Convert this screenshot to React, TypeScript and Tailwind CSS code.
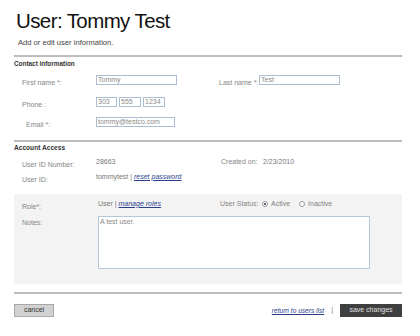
import React from "react";

function Label({ children, className = "" }: { children: React.ReactNode; className?: string }) {
  return <span className={`text-[7px] text-[#858585] ${className}`}>{children}</span>;
}

function TextBox({ value, className = "" }: { value: string; className?: string }) {
  return (
    <div className={`h-[10px] border border-[#aabdd2] bg-white px-[1px] text-[7px] leading-[8px] text-[#8a8a8a] ${className}`}>
      {value}
    </div>
  );
}

function Radio({ checked }: { checked?: boolean }) {
  return (
    <span className="flex h-[6px] w-[6px] items-center justify-center rounded-full border border-[#9a9a9a] bg-white">
      {checked && <span className="h-[2px] w-[2px] rounded-full bg-[#333]" />}
    </span>
  );
}

function Rule() {
  return <div className="h-[2px] w-[388px] bg-[#bdbdbd]" />;
}

export default function App() {
  return (
    <div
      className="relative h-[336px] w-[420px] overflow-hidden bg-white pl-[14px]"
      style={{ fontFamily: '"Liberation Sans", Arial, sans-serif' }}
    >
      {/* Header */}
      <h1 className="pt-[11px] pl-[2px] text-[20.5px] leading-[20px] tracking-[-0.6px] text-[#111]">User: Tommy Test</h1>
      <p className="mt-[7px] pl-[4px] text-[7.6px] leading-[9px] text-[#444]">Add or edit user information.</p>
      <div className="mt-[8px]">
        <Rule />
      </div>

      {/* Contact information */}
      <div className="mt-[2px] flex h-[10px] items-center text-[6.4px] font-bold text-[#333]">Contact information</div>
      <div className="mt-[5px] flex h-[12px] items-center">
        <div className="w-[82px] pl-[8px]">
          <Label>First name *:</Label>
        </div>
        <TextBox value="Tommy" className="w-[81px]" />
        <div className="ml-[41px] w-[41px] pl-[1px]">
          <Label>Last name *:</Label>
        </div>
        <TextBox value="Test" className="w-[81px]" />
      </div>
      <div className="mt-[10px] flex h-[12px] items-center">
        <div className="w-[82px] pl-[8px]">
          <Label>Phone :</Label>
        </div>
        <div className="flex gap-[2px]">
          <TextBox value="303" className="w-[21px]" />
          <TextBox value="555" className="w-[22px]" />
          <TextBox value="1234" className="w-[22px]" />
        </div>
      </div>
      <div className="mt-[8px] flex h-[12px] items-center">
        <div className="w-[82px] pl-[12px]">
          <Label>Email *:</Label>
        </div>
        <TextBox value="tommy@testco.com" className="w-[79px]" />
      </div>
      <div className="mt-[12px]">
        <Rule />
      </div>

      {/* Account access */}
      <div className="mt-[1px] flex h-[10px] items-center text-[6.6px] font-bold text-[#333]">Account Access</div>
      <div className="mt-[3px] flex h-[12px] items-center">
        <div className="w-[82px] pl-[8px]">
          <Label>User ID Number:</Label>
        </div>
        <span className="w-[125px] text-[7px] text-[#777]">28663</span>
        <Label className="w-[42px]">Created on:</Label>
        <span className="text-[7px] text-[#777]">2/23/2010</span>
      </div>
      <div className="mt-[3px] flex h-[12px] items-center">
        <div className="w-[82px] pl-[8px]">
          <Label>User ID:</Label>
        </div>
        <span className="text-[7px] text-[#777]">
          tommytest |{" "}
          <a className="italic text-[#2a3f8c] underline">reset password</a>
        </span>
      </div>

      {/* Role / notes panel */}
      <div className="mt-[11px] w-[388px] bg-[#f3f3f3] pt-[4px] pb-[15px]">
        <div className="flex h-[12px] items-center">
          <div className="w-[84px] pl-[8px]">
            <Label>Role*:</Label>
          </div>
          <span className="w-[122px] text-[7px] text-[#777]">
            User |{" "}
            <a className="italic text-[#2a3f8c] underline">manage roles</a>
          </span>
          <Label className="w-[42px]">User Status:</Label>
          <div className="flex items-center gap-[3px] text-[7px] text-[#808080]">
            <Radio checked />
            <span className="mr-[6px]">Active</span>
            <Radio />
            <span>Inactive</span>
          </div>
        </div>
        <div className="mt-[6px] flex">
          <div className="w-[84px] pl-[8px] leading-[8px]">
            <Label>Notes:</Label>
          </div>
          <div className="h-[53px] w-[272px] border border-[#b5c7d8] bg-white px-[1px] text-[7px] leading-[9px] text-[#8a8a8a]">
            A test user.
          </div>
        </div>
      </div>
      <div className="mt-[8px]">
        <Rule />
      </div>

      {/* Footer actions */}
      <div className="mt-[10px] flex w-[388px] items-center">
        <button className="flex h-[13px] w-[40px] items-center justify-center border border-[#a8a8a8] bg-[#d2d2d2] text-[7px] text-[#333]">
          cancel
        </button>
        <div className="ml-auto flex items-center">
          <a className="text-[6.6px] italic text-[#2a3f8c] underline">return to users list</a>
          <span className="mx-[7px] text-[7px] text-[#777]">|</span>
          <button className="flex h-[13px] w-[62px] items-center justify-center bg-[#3f3f3f] text-[7px] text-[#e0e0e0]">
            save changes
          </button>
        </div>
      </div>
    </div>
  );
}
